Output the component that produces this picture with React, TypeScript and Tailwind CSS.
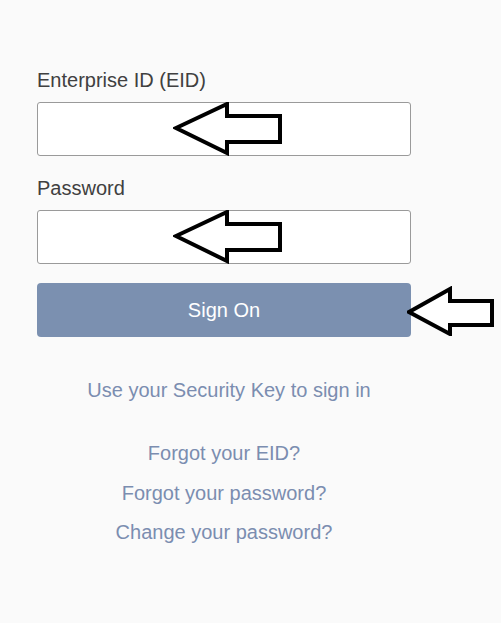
import React from "react";

function Arrow({ className }: { className?: string }) {
  return (
    <svg className={className} viewBox="0 0 110 54" fill="white" stroke="black" strokeWidth={4} strokeLinejoin="miter">
      <path d="M3 26 L54 2 L54 14 L107 14 L107 40 L54 40 L54 51 Z" />
    </svg>
  );
}

function Field({ label, first }: { label: string; first?: boolean }) {
  return (
    <div className={first ? "" : "mt-[20px]"}>
      <label className="block text-[20px] leading-[24px] text-[#404040]">{label}</label>
      <div className="relative mt-[10px]">
        <input className="block h-[54px] w-full rounded-[3px] border border-[#9a9a9a] bg-white" />
        <Arrow className="absolute left-[136px] top-[0px] h-[54px] w-[110px]" />
      </div>
    </div>
  );
}

export default function App() {
  return (
    <div className="min-h-screen bg-[#fafafa] font-['Liberation_Sans',Arial,sans-serif]">
      <div className="ml-[37px] w-[374px] pt-[68px]">
        <Field first label="Enterprise ID (EID)" />
        <Field label="Password" />
        <div className="relative mt-[19px]">
          <button className="block h-[54px] w-full rounded-[4px] bg-[#7b90b0] text-[20px] text-white">Sign On</button>
          <svg className="absolute left-[370px] top-[3px] h-[50px] w-[88px]" viewBox="0 0 88 50" fill="white" stroke="black" strokeWidth={4}>
            <path d="M2 26 L43 3 L43 15 L85 15 L85 39 L43 39 L43 48 Z" />
          </svg>
        </div>
        <div className="mt-[41px] text-center text-[20px] leading-[24px] text-[#7b8db0]">
          <a className="block pl-[10px]">Use your Security Key to sign in</a>
          <a className="mt-[39px] block">Forgot your EID?</a>
          <a className="mt-[16px] block">Forgot your password?</a>
          <a className="mt-[15px] block">Change your password?</a>
        </div>
      </div>
    </div>
  );
}
